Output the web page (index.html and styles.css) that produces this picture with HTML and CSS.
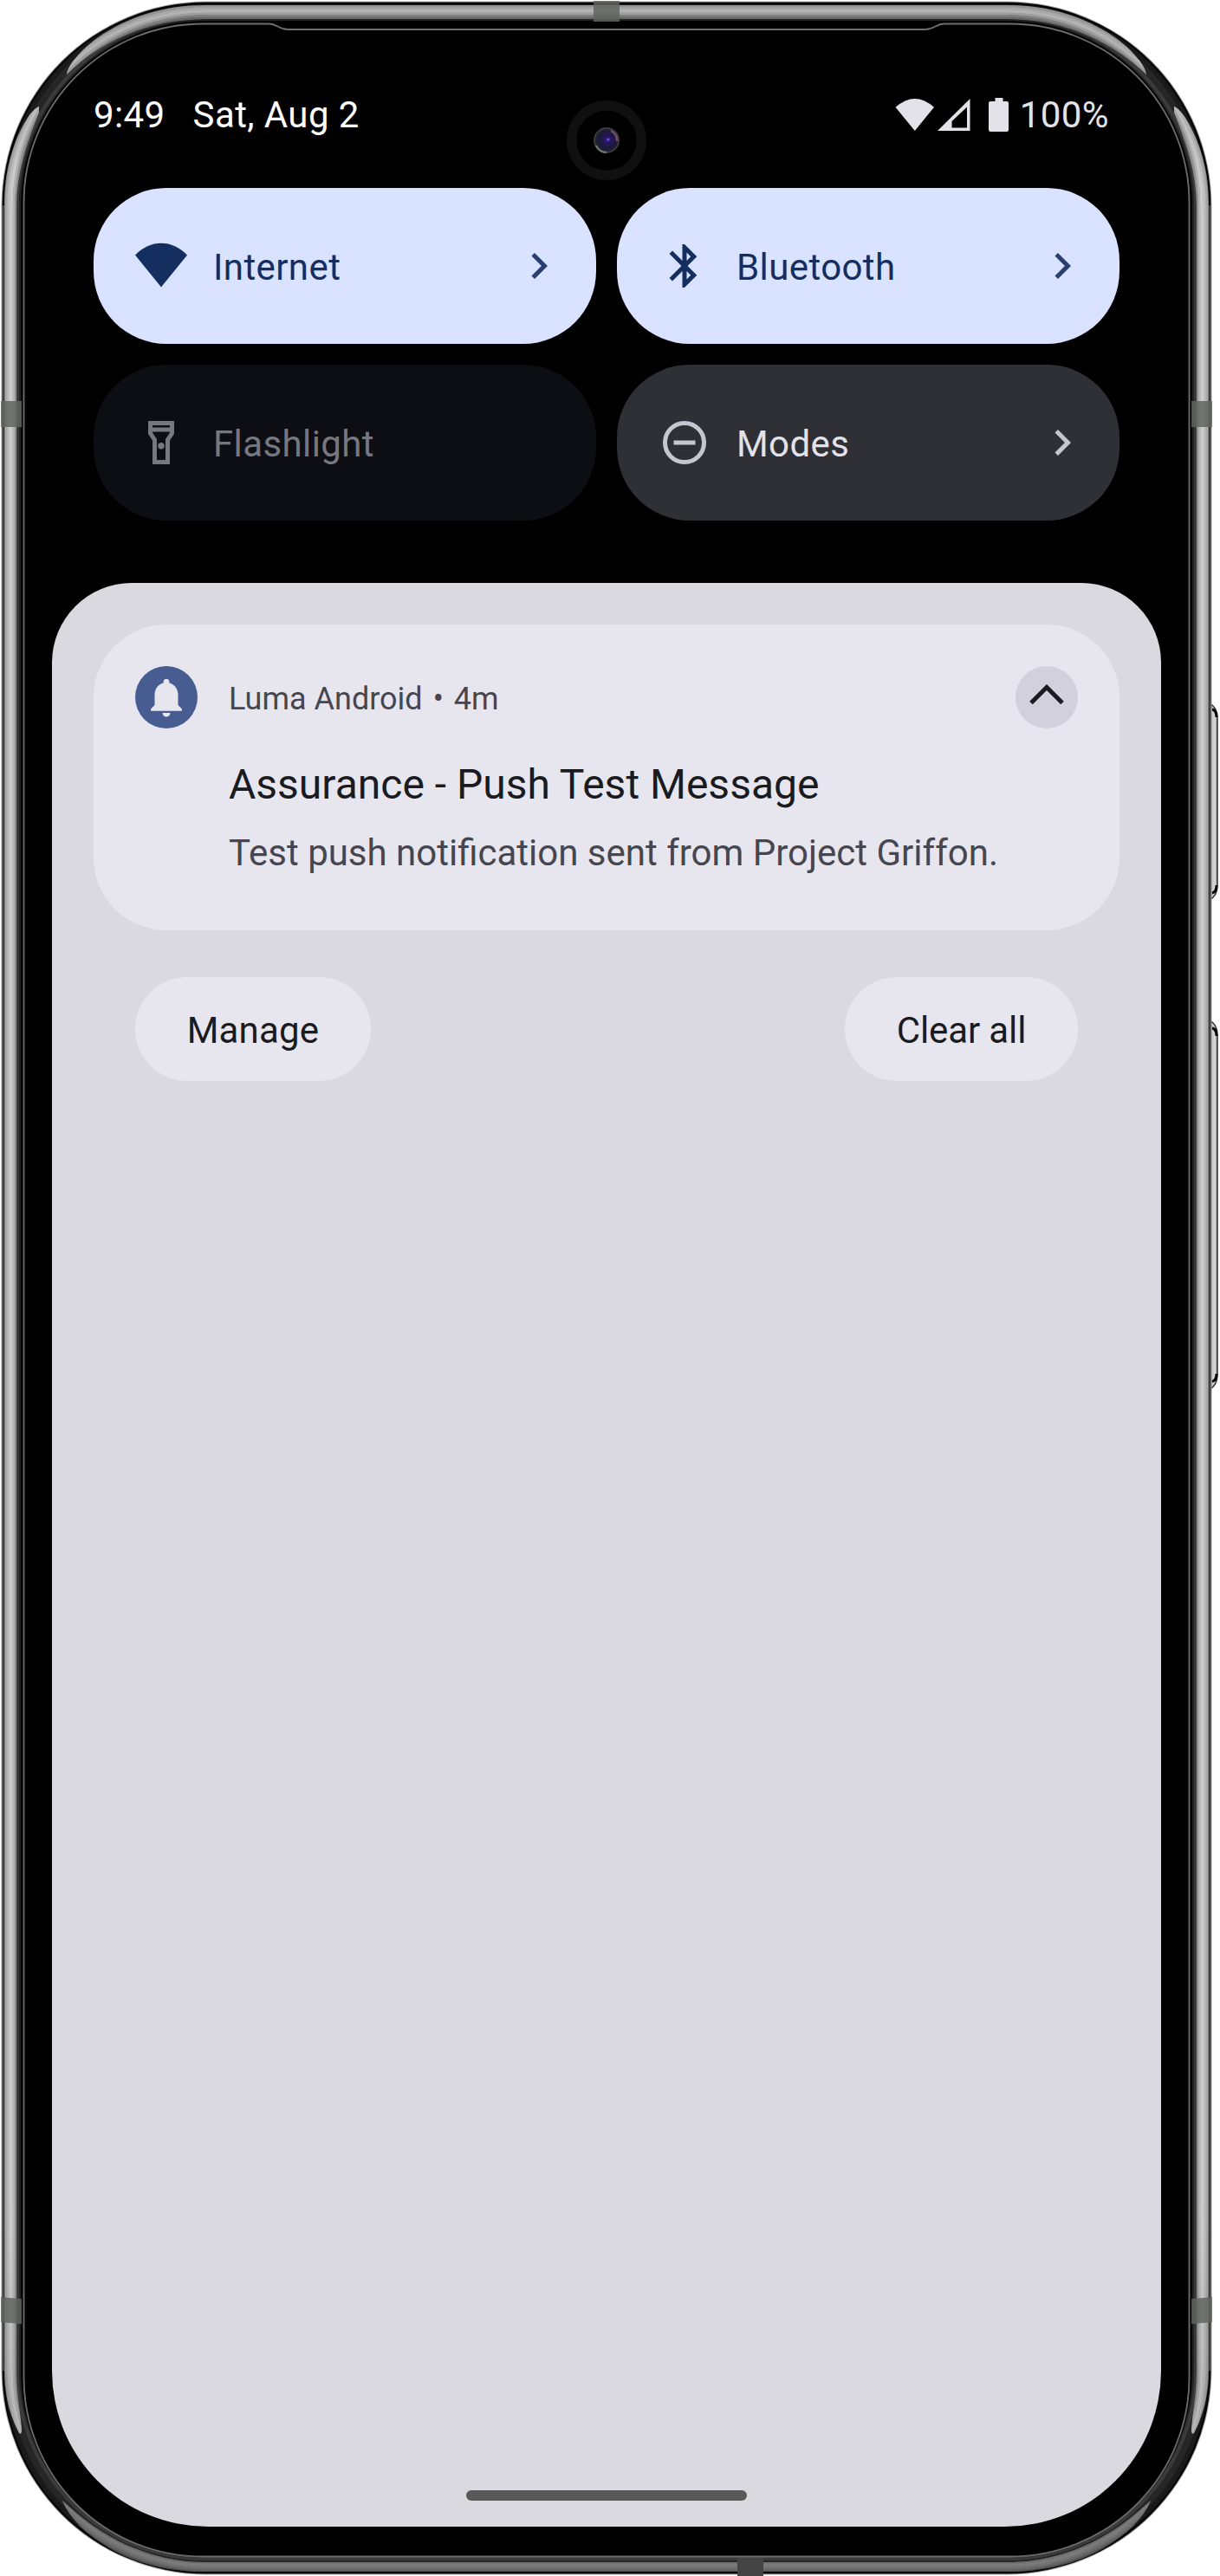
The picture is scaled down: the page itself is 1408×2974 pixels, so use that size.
FILE: index.html
```
<!DOCTYPE html>
<html lang="en">
<head>
<meta charset="utf-8">
<title>Notification shade</title>
<link rel="stylesheet" href="styles.css">
</head>
<body>
<div class="phone">
  <svg class="chassis" viewBox="0 0 1408 2974" aria-hidden="true">
    <defs>
      <linearGradient id="button" x1="0" x2="1" y1="0" y2="0">
        <stop offset="0" stop-color="#444"/><stop offset=".3" stop-color="#c8c8c8"/><stop offset=".7" stop-color="#d8d8d8"/><stop offset="1" stop-color="#888"/>
      </linearGradient>
      <linearGradient id="shine" x1="0" x2="0" y1="0" y2="1">
        <stop offset="0" stop-color="#000" stop-opacity=".12"/><stop offset=".03" stop-color="#000" stop-opacity=".12"/><stop offset=".07" stop-color="#000" stop-opacity="0"/><stop offset=".86" stop-color="#000" stop-opacity="0"/><stop offset=".95" stop-color="#000" stop-opacity=".12"/><stop offset=".97" stop-color="#000" stop-opacity=".4"/><stop offset="1" stop-color="#000" stop-opacity=".4"/>
      </linearGradient>
      <radialGradient id="lens" cx=".55" cy=".48" r=".5">
        <stop offset="0" stop-color="#4a2ea8"/><stop offset=".25" stop-color="#281561"/><stop offset=".7" stop-color="#1d1a38"/><stop offset="1" stop-color="#1c2530"/>
      </radialGradient>
      <clipPath id="highlights">
        <path d="M77 86C78 76 92 59 112 44C150 18 190 6 237 6H1163C1210 6 1250 18 1288 44C1308 59 1322 76 1323 86C1280 46 1230 23 1163 22H237C170 23 118 46 77 86Z"/>
        <path d="M45 123C36 126 24 147 16 169C8 192 5 212 5 237V2737C5 2765 12 2790 22 2809Q25 2811 25 2806C24 2786 19 2765 19 2737V237C19 200 31 165 45 130Z"/>
        <path d="M1355 123C1364 126 1376 147 1384 169C1392 192 1395 212 1395 237V2737C1395 2765 1388 2790 1378 2809Q1375 2811 1375 2806C1376 2786 1381 2765 1381 2737V237C1381 200 1369 165 1355 130Z"/>
        <path d="M72 2887C80 2906 98 2925 125 2941C160 2962 200 2969 237 2969H1163C1200 2969 1240 2962 1275 2941C1302 2925 1320 2906 1328 2887C1285 2928 1230 2958 1163 2958H237C170 2958 115 2928 72 2887Z"/>
      </clipPath>
    </defs>
    <g fill="url(#button)" stroke="#333" stroke-width="1.5">
      <path d="M1396 812Q1405 817 1405 829V1022Q1405 1034 1396 1039Z"/>
      <path d="M1396 1178Q1405 1183 1405 1195V1587Q1405 1599 1396 1604Z"/>
      <path d="M1399 819Q1404 820 1404 828M1399 1031Q1404 1030 1404 1022M1399 1187Q1404 1188 1404 1196M1399 1595Q1404 1594 1404 1586" fill="none" stroke="#000" stroke-width="3"/>
    </g>
    <rect x="1.5" y="1.5" width="1397" height="2971" rx="236" fill="#aaa"/>
    <rect x="2.5" y="2.5" width="1395" height="2969" rx="235" fill="#050505"/>
    <g fill="none" stroke-width="2">
      <rect x="8" y="8" width="1384" height="2958" rx="229" stroke="#1a1a1a" stroke-width="6"/>
      <rect x="14" y="14" width="1372" height="2946" rx="223" stroke="#262626" stroke-width="7"/>
      <rect x="20" y="20" width="1360" height="2934" rx="217" stroke="#3a3a3a" stroke-width="5"/>
      <rect x="23" y="23" width="1354" height="2928" rx="214" stroke="#222"/>
    </g>
    <path d="M3.5 237V2737M1396.5 237V2737" stroke="#585858" stroke-width="2"/>
    <g clip-path="url(#highlights)">
      <g fill="none" stroke-width="3">
        <rect x="5" y="5" width="1390" height="2964" rx="232" stroke="#858585"/>
        <rect x="7.5" y="7.5" width="1385" height="2959" rx="229.5" stroke="#a8a8a8"/>
        <rect x="10" y="10" width="1380" height="2954" rx="227" stroke="#bebebe"/>
        <rect x="13" y="13" width="1374" height="2948" rx="224" stroke="#cbcbcb" stroke-width="4"/>
        <rect x="16" y="16" width="1368" height="2942" rx="221" stroke="#b4b4b4"/>
        <rect x="18.5" y="18.5" width="1363" height="2937" rx="218.5" stroke="#929292"/>
        <rect x="22" y="22" width="1356" height="2930" rx="215" stroke="#777" stroke-width="5"/>
      </g>
      <rect width="1400" height="2974" fill="url(#shine)"/>
    </g>
    <path d="M234 25H1166A209 209 0 0 1 1375 234V2742A209 209 0 0 1 1166 2951H234A209 209 0 0 1 25 2742V234A209 209 0 0 1 234 25Z"/>
    <path d="M234 27.5H310C320 27.5 322 34 332 34H1068C1078 34 1080 27.5 1090 27.5H1166A206.500 206.500 0 0 1 1372.500 234V2745A206.500 206.500 0 0 1 1166 2951.500H234A206.500 206.500 0 0 1 27.500 2745V234A206.500 206.500 0 0 1 234 27.500Z" fill="#000" stroke="#6c6e6c" stroke-width="1.8"/>
    <path d="M685 1H715V25H685ZM1 463H25V493H1ZM1375 463H1399V493H1375ZM1 2652L25 2654V2683L1 2681ZM1375 2654L1399 2652V2681L1375 2683Z" fill="#61645f" fill-opacity=".85"/>
    <path d="M851 2953H881V2974H851Z" fill="#434443"/>
    <circle cx="700" cy="162" r="40.300" fill="#000" stroke="#101010" stroke-width="11.500"/>
    <circle cx="700" cy="162" r="14" fill="url(#lens)" stroke="#3d3b3d" stroke-width="2"/>
    <path d="M705 151A12.500 12.500 0 0 1 712 163" fill="none" stroke="#704d70" stroke-width="2.500"/>
    <path d="M688 168A13.500 13.500 0 0 0 700 176" fill="none" stroke="#777" stroke-width="2"/>
    <circle cx="702" cy="161" r="1.300" fill="#7a58e6"/>
  </svg>

  <main class="screen">
    <header class="status">
      <div class="status-left"><span>9:49</span><span>Sat, Aug 2</span></div>
      <div class="status-right">
        <svg class="status-icons" viewBox="0 0 132 40" aria-hidden="true">
          <path d="M0.500 10.800Q22.800 -9 45 10.800L22.800 38Z"/>
          <path fill-rule="evenodd" d="M49 38L86.500 1V38ZM65.500 34.500H83V10.500L65.500 27Z"/>
          <path d="M115.500 0H124.500V4H129Q131 4 131 6V37Q131 39 129 39H110Q108 39 108 37V6Q108 4 110 4H115.500Z"/>
        </svg>
        <span>100%</span>
      </div>
    </header>

    <section class="tiles">
      <div class="tile tile-on">
        <svg class="icon" viewBox="0 0 24 24"><path d="M0 7C7-.4 17-.4 24 7L12 21.800Z"/></svg>
        <span class="label">Internet</span>
        <svg class="chevron" viewBox="0 0 24 24"><path d="M10 6 8.590 7.410 13.170 12l-4.580 4.590L10 18l6-6z"/></svg>
      </div>
      <div class="tile tile-on">
        <svg class="icon" viewBox="0 0 24 24"><path d="M17.710 7.710 12 2h-1v7.590L6.410 5 5 6.410 10.590 12 5 17.590 6.410 19 11 14.410V22h1l5.710-5.710-4.300-4.290 4.300-4.290zM13 5.830l1.880 1.880L13 9.590V5.830zm1.880 10.460L13 18.170v-3.760l1.880 1.880z"/></svg>
        <span class="label">Bluetooth</span>
        <svg class="chevron" viewBox="0 0 24 24"><path d="M10 6 8.590 7.410 13.170 12l-4.580 4.590L10 18l6-6z"/></svg>
      </div>
      <div class="tile tile-disabled">
        <svg class="icon" viewBox="0 0 24 24"><path fill-rule="evenodd" d="M6 2v6l2 3v11h8V11l2-3V2H6zm10 2v1H8V4h8zm-2 6.400V20h-4v-9.600L8 7.400V7h8v.4l-2 3z"/><circle cx="12" cy="13.500" r="1.500"/></svg>
        <span class="label">Flashlight</span>
      </div>
      <div class="tile tile-off">
        <svg class="icon" viewBox="0 0 24 24"><path d="M7 11h10v2H7z"/><circle cx="12" cy="12" r="9" fill="none" stroke="currentColor" stroke-width="2"/></svg>
        <span class="label">Modes</span>
        <svg class="chevron" viewBox="0 0 24 24"><path d="M10 6 8.590 7.410 13.170 12l-4.580 4.590L10 18l6-6z"/></svg>
      </div>
    </section>

    <section class="shade">
      <article class="card">
        <div class="app-icon">
          <svg class="bell" viewBox="0 0 24 24"><path d="M12 22c1.100 0 2-.9 2-2h-4c0 1.100.89 2 2 2zm6-6v-5c0-3.070-1.640-5.640-4.500-6.320V4c0-.83-.67-1.500-1.500-1.500s-1.500.67-1.500 1.500v.68C7.630 5.360 6 7.920 6 11v5l-2 2v1h16v-1l-2-2z"/></svg>
        </div>
        <div class="card-text">
          <div class="meta"><span>Luma Android</span><span>•</span><span>4m</span></div>
          <h2 class="title">Assurance - Push Test Message</h2>
          <p class="message">Test push notification sent from Project Griffon.</p>
        </div>
        <div class="collapse">
          <svg class="collapse-icon" viewBox="0 0 40 24"><path d="M2 21.500 20 3.500 38 21.500" fill="none" stroke="#1a1b20" stroke-width="5"/></svg>
        </div>
      </article>
      <div class="actions">
        <button class="pill pill-manage" type="button">Manage</button>
        <button class="pill pill-clear" type="button">Clear all</button>
      </div>
      <div class="home-bar"></div>
    </section>
  </main>
</div>
</body>
</html>
```
FILE: styles.css
```
* { box-sizing: border-box; }

body {
  margin: 0;
  background: #fff;
  font-family: Roboto, "Liberation Sans", sans-serif;
  font-size: 42px;
  font-weight: 400;
}

svg { display: block; fill: currentColor; }

.phone {
  position: relative;
  width: 1408px;
  height: 2974px;
  overflow: hidden;
  padding: 57px 68px 57px 60px;
}

/* The metal body and camera sit behind the screen content. */
.chassis {
  position: absolute;
  inset: 0;
  width: 1408px;
  height: 2974px;
  fill: #000;
}

.screen {
  position: relative;
  display: flex;
  flex-direction: column;
  width: 1280px;
  height: 2860px;
  border-radius: 0 0 180px 180px;
  overflow: hidden;
}

.status {
  display: flex;
  justify-content: space-between;
  height: 160px;
  padding: 51px 60px 0 48px;
  line-height: 50px;
  letter-spacing: .4px;
}

.status-left { display: flex; gap: 32px; color: #fff; }
.status-right { display: flex; gap: 12px; color: #e3e2e9; }
.status-icons { width: 132px; height: 40px; margin-top: 5px; }

.tiles {
  display: grid;
  grid-template-columns: 580px 580px;
  gap: 24px;
  padding: 0 48px;
}

.tile {
  display: flex;
  align-items: center;
  height: 180px;
  padding: 0 36px 0 48px;
  border-radius: 84px;
}

.tile-on { background: #d9e2ff; color: #152e60; }
.tile-disabled { background: #0d0e13; color: #777780; }
.tile-off { background: #2f3036; color: #c6c6d0; }
.tile-off .label { color: #e3e2e9; }

.icon, .chevron { width: 60px; height: 60px; flex: none; }
.chevron { opacity: .9; }
.tile-off .chevron { opacity: 1; }

.label {
  flex: 1;
  padding: 3px 0 0 30px;
  letter-spacing: .4px;
}

.shade {
  display: flex;
  flex-direction: column;
  flex: 1;
  margin-top: 72px;
  padding: 48px 48px 30px;
  border-radius: 92px 92px 0 0;
  background: #dad9df;
}

.card {
  display: flex;
  height: 353px;
  padding: 48px;
  border-radius: 84px;
  background: #e7e6ef;
}

.app-icon, .collapse {
  display: flex;
  align-items: center;
  justify-content: center;
  flex: none;
  width: 72px;
  height: 72px;
  border-radius: 50%;
}

.app-icon { background: #475d92; color: #e7e6ef; }
.bell { width: 54px; height: 54px; }
.collapse { background: #d2d1db; }
.collapse-icon { width: 40px; height: 24px; margin-bottom: 7px; }

.card-text { flex: 1; padding-left: 36px; white-space: nowrap; }

.meta {
  display: flex;
  gap: 12px;
  padding-top: 2px;
  color: #45464f;
  font-size: 36px;
  line-height: 72px;
}

.title {
  margin: 33px 0 0;
  color: #1a1b20;
  font-size: 48px;
  font-weight: 400;
  line-height: 60px;
}

.message { margin: 24px 0 0; color: #45464f; line-height: 50px; }

.actions {
  display: flex;
  justify-content: space-between;
  padding: 54px 48px 0;
}

.pill {
  height: 120px;
  padding: 3px 0 0;
  border: 0;
  border-radius: 60px;
  background: #e7e6ef;
  color: #1a1b20;
  font: inherit;
}

.pill-manage { width: 272px; letter-spacing: .2px; }
.pill-clear { width: 269px; letter-spacing: -.1px; }

.home-bar {
  width: 324px;
  height: 12px;
  margin: auto auto 0;
  border-radius: 6px;
  background: #585859;
}
```
